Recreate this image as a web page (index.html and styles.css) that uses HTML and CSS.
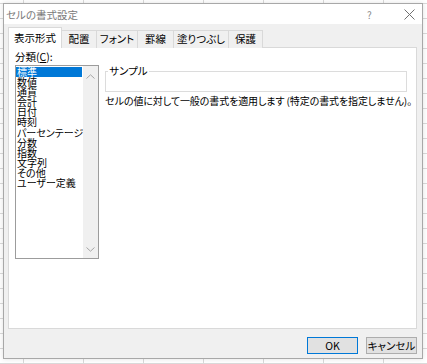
FILE: index.html
```html
<html><head>
<meta charset="UTF-8">
<meta name="viewport" content="width=device-width, initial-scale=1.0">
<title>セルの書式設定</title>
<link rel="stylesheet" href="styles.css">
</head>
<body>
  <div class="dialog">
    <div class="titlebar">
      <span class="title">セルの書式設定</span>
      <span class="help">?</span>
      <span class="close">
        <svg width="11" height="11" viewBox="0 0 11 11"><path d="M0.5 0.5 L10.5 10.5 M10.5 0.5 L0.5 10.5" stroke="#707070" stroke-width="1" fill="none"/></svg>
      </span>
    </div>

    <div class="dialog-body">
      <div class="tabs">
        <div class="tab active">表示形式</div>
        <div class="tab t-align">配置</div>
        <div class="tab t-font">フォント</div>
        <div class="tab t-border">罫線</div>
        <div class="tab t-fill">塗りつぶし</div>
        <div class="tab t-protect">保護</div>
      </div>

      <div class="panel">
        <div class="category">
          <div class="label">分類(<u>C</u>):</div>
          <div class="listbox">
            <ul class="items">
              <li class="selected">標準</li>
              <li>数値</li>
              <li>通貨</li>
              <li>会計</li>
              <li>日付</li>
              <li>時刻</li>
              <li>パーセンテージ</li>
              <li>分数</li>
              <li>指数</li>
              <li>文字列</li>
              <li>その他</li>
              <li>ユーザー定義</li>
            </ul>
            <div class="scrollbar">
              <svg width="9" height="5" viewBox="0 0 9 5"><path d="M0.5 4.5 L4.5 0.8 L8.5 4.5" stroke="#a6a6a6" fill="none"/></svg>
              <svg width="9" height="5" viewBox="0 0 9 5"><path d="M0.5 0.5 L4.5 4.2 L8.5 0.5" stroke="#a6a6a6" fill="none"/></svg>
            </div>
          </div>
        </div>

        <div class="details">
          <fieldset class="sample">
            <legend>サンプル</legend>
            <div class="sample-value"></div>
          </fieldset>
          <p class="description">セルの値に対して一般の書式を適用します (特定の書式を指定しません)。</p>
        </div>
      </div>

      <div class="buttons">
        <button class="btn default">OK</button>
        <button class="btn">キャンセル</button>
      </div>
    </div>
  </div>
</body>
</html>
```

FILE: styles.css
```css
body {
  margin: 0;
  padding: 3px 0 0 3px;
  width: 427px;
  height: 364px;
  box-sizing: border-box;
  overflow: hidden;
  background-color: #ffffff;
  background-image:
    linear-gradient(to right, #dadada 1px, transparent 1px),
    linear-gradient(to bottom, #dadada 1px, transparent 1px);
  background-size: 60px 15px;
  background-position: 23px 3px;
  font-family: "Noto Sans CJK JP", "Noto Sans", sans-serif;
  font-feature-settings: "palt";
  font-size: 10.5px;
  color: #000;
}
.dialog {
  width: 420px;
  height: 356px;
  box-sizing: border-box;
  border: 1px solid #a8a8a8;
  background-color: #f0f0f0;
  box-shadow: 0 0 5px rgba(0,0,0,0.12);
  display: flex;
  flex-direction: column;
}
.titlebar {
  height: 20px;
  background-color: #ffffff;
  display: flex;
  align-items: center;
  padding-left: 2px;
}
.title {
  flex: 1;
  color: #7a7a7a;
  font-size: 10.5px;
}
.help {
  color: #8a8a8a;
  font-size: 10px;
  width: 37px;
}
.close {
  width: 18px;
  display: flex;
  align-items: center;
}
.dialog-body {
  flex: 1;
  padding: 4px 5px 4px 4px;
  display: flex;
  flex-direction: column;
}
.tabs {
  display: flex;
  align-items: flex-end;
  height: 19px;
  position: relative;
  z-index: 1;
}
.tab {
  height: 18px;
  line-height: 16px;
  box-sizing: border-box;
  border: 1px solid #d9d9d9;
  border-bottom: none;
  margin-left: -1px;
  margin-bottom: -1px;
  text-align: center;
  background-color: #f0f0f0;
}
.tab.active {
  margin-left: 0;
  width: 54px;
  height: 21px;
  line-height: 19px;
  background-color: #ffffff;
}
.t-align { width: 36px; }
.t-font { width: 42px; }
.t-border { width: 37px; }
.t-fill { width: 56px; }
.t-protect { width: 35px; }
.panel {
  height: 282px;
  box-sizing: border-box;
  border: 1px solid #d9d9d9;
  background-color: #ffffff;
  padding: 3px 5px 0 6px;
  display: flex;
}
.category {
  width: 88px;
}
.label {
  line-height: 12px;
  margin-bottom: 2px;
}
.listbox {
  height: 194px;
  box-sizing: border-box;
  border: 1px solid #9c9c9c;
  display: flex;
}
.items {
  flex: 1;
  list-style: none;
  margin: 0;
  padding: 1px 0 0 0;
  font-size: 10px;
}
.items li {
  line-height: 10.1px;
  height: 10.1px;
  padding-left: 1px;
  white-space: nowrap;
}
.items li.selected {
  background-color: #0078d7;
  color: #ffffff;
  margin-right: 1px;
}
.scrollbar {
  width: 15px;
  background-color: #f0f0f0;
  display: flex;
  flex-direction: column;
  justify-content: space-between;
  align-items: center;
  padding: 8px 0 6px;
}
.details {
  flex: 1;
  margin-left: 6px;
  padding-top: 14px;
}
.sample {
  margin: 0;
  padding: 0;
  border: 1px solid #dcdcdc;
  width: 302px;
  box-sizing: border-box;
}
.sample legend {
  margin-left: 2px;
  padding: 0 1px;
  line-height: 12px;
}
.sample-value {
  height: 14px;
}
.description {
  margin: 3px 0 0 0;
  line-height: 12px;
  font-size: 10px;
  letter-spacing: -0.1px;
  white-space: nowrap;
}
.buttons {
  margin-top: 8px;
  display: flex;
  justify-content: flex-end;
  gap: 8px;
}
.btn {
  width: 51px;
  height: 17px;
  padding: 0;
  border: 1px solid #adadad;
  background-color: #e1e1e1;
  font-family: inherit;
  font-feature-settings: "palt";
  font-size: 10.5px;
  line-height: 14px;
  color: #000;
}
.btn.default {
  border-color: #0078d7;
}
```
